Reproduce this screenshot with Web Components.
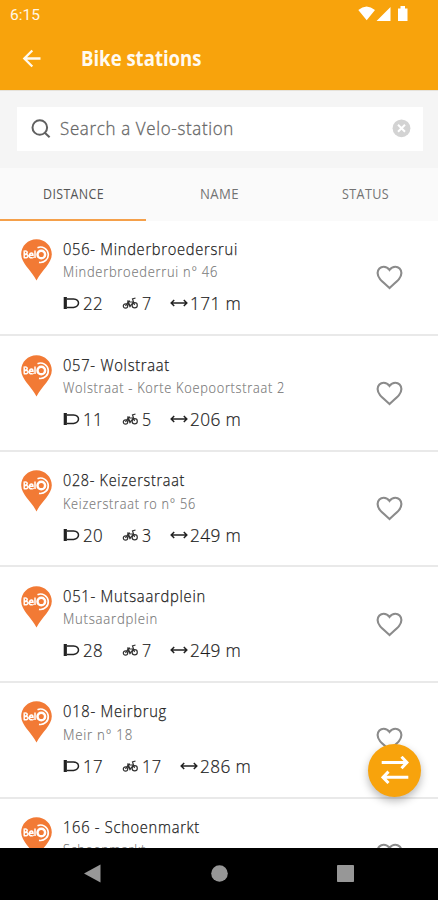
<!DOCTYPE html>
<html lang="en">
<head>
<meta charset="utf-8">
<title>Bike stations</title>
<style>
html,body{margin:0;height:100%;background:#fff;overflow:hidden}
body{font-family:"Open Sans","Noto Sans",sans-serif}
</style>
</head>
<body>
<bike-app></bike-app>
<script>
// One line of text, drawn at a set width
class FitText extends HTMLElement {
  connectedCallback() {
    if (this.shadowRoot) return;
    const w = +this.getAttribute('w');
    this.attachShadow({mode: 'open'}).innerHTML = `
      <style>:host{display:block;flex:none;width:${w}px;white-space:nowrap}
      span{display:inline-block;transform-origin:0 50%}</style><span><slot></slot></span>`;
    const s = this.shadowRoot.querySelector('span');
    const n = s.getBoundingClientRect().width;
    if (n) s.style.transform = `scaleX(${w / n})`;
  }
}

class StatusBar extends HTMLElement {
  constructor() {
    super();
    this.attachShadow({mode: 'open'}).innerHTML = `
    <style>:host{display:flex;height:28px;justify-content:space-between;padding:0 28px 0 10px;color:#fff8e8;font:400 15.5px/30px Roboto,sans-serif}
    svg{margin-top:5px}</style>
    <fit-text w="30">6:15</fit-text>
    <svg width="52" height="18" fill="#fff"><path d="M.3 5Q8.500-2 17 5L8.700 15.300zM18.500 16L32.500 2V16zM40 3.500h2.500V1h4.500v2.500h2.500V16h-9.500z"/></svg>`;
  }
}

class AppBar extends HTMLElement {
  constructor() {
    super();
    this.attachShadow({mode: 'open'}).innerHTML = `
    <style>:host{display:flex;height:61.5px;align-items:center;padding-left:22px;color:#fffaf0;font-weight:700;font-size:20.500px;line-height:30px}
    svg{margin-right:40px}fit-text{margin-top:-2px}</style>
    <svg width="19" height="20" fill="none" stroke="#fffaf0" stroke-width="2.300"><path d="M18.500 9.500H2.500M10.300 1.500L2.300 9.500L10.300 17.500"/></svg>
    <fit-text w="120.5"><slot></slot></fit-text>`;
  }
}

class SearchBox extends HTMLElement {
  constructor() {
    super();
    this.attachShadow({mode: 'open'}).innerHTML = `
    <style>:host{display:block;background:#f5f5f5;padding:16px 15px 17px 17px;height:44px;border-top:1px solid #e6e2da}
    div{display:flex;align-items:center;height:44px;background:#fff;padding:0 12px 0 14px;font-size:18px;color:#666;letter-spacing:.04em;font-weight:300;-webkit-text-stroke:.3px #666}
    .s{margin-right:9px}.c{margin-left:auto}fit-text{margin-top:-1px}</style>
    <div><svg class="s" width="20" height="20" fill="none" stroke="#606060" stroke-width="2"><circle cx="8.800" cy="8.500" r="7.300"/><path d="M13.800 13.700L18.600 18.300"/></svg>
    <fit-text w="174">Search a Velo-station</fit-text>
    <svg class="c" width="19" height="19"><circle cx="9.500" cy="9.300" r="8.900" fill="#d3d3d3"/><path d="M6 5.800l7 7M13 5.800l-7 7" stroke="#fff" stroke-width="2"/></svg></div>`;
  }
}

class SortTabs extends HTMLElement {
  constructor() {
    super();
    this.attachShadow({mode: 'open'}).innerHTML = `
    <style>:host{display:grid;grid-template-columns:repeat(3,1fr);height:53.100px;background:#fafafa;color:#737373;font-size:14px;letter-spacing:.03em}
    div{display:flex;justify-content:center;align-items:center;padding-top:1px;border-bottom:2px solid transparent}
    .on{border-color:#f5a04a;color:#555}</style>
    <div class="on"><fit-text w="61">DISTANCE</fit-text></div><div><fit-text w="39">NAME</fit-text></div><div><fit-text w="47">STATUS</fit-text></div>`;
  }
}

class StationPin extends HTMLElement {
  constructor() {
    super();
    this.attachShadow({mode: 'open'}).innerHTML = `
    <style>:host{display:block;width:31px;height:42px}
    svg{display:block}</style>
    <svg width="31" height="42"><path d="M15.500.3C7 .3.200 7 .200 15.300.200 20 3 24 5.500 27.500 9 32 12.800 36 15.500 41.500 18.200 36 22 32 25.500 27.500 28 24 30.800 20 30.800 15.300 30.800 7 24 .3 15.500.3z" fill="#f27a35"/>
    <g fill="none" stroke="#fff"><circle cx="20.300" cy="15.500" r="3.800" stroke-width="2.500"/><path d="M16.500 8.700A7.700 7.700 0 1 1 18 23.300" stroke-width="1.700"/>
    <path d="M3.200 12.300v6.400M2.600 12.300q3.600-.9 3.600 1T3.500 15.300q3.500-.1 3.500 1.800T2.800 18.700M8.500 16.200h3.500q0-2.300-1.600-2.300t-1.900 2.500 1.900 2.400 1.600-.6M14 11.500v7.500" stroke-width="1.500"/></g></svg>`;
  }
}

class StationRow extends HTMLElement {
  constructor() {
    super();
    const a = n => this.getAttribute(n);
    const [tw, sw, dw] = a('widths').split(' ');
    const counts = () => `<div class="n">
      <svg width="17" height="14" style="margin-right:3px" fill="none" stroke="#222"><path d="M2.300 1v12" stroke-width="3.200"/><path d="M4 3h6.500Q15.500 3.500 15.500 7t-5 4.500H4" stroke-width="1.500"/></svg>
      <fit-text w="20">${a('docks')}</fit-text>
      <svg width="17" height="14" style="margin:0 3px 0 19px" fill="none" stroke="#333" stroke-width="1.200"><circle cx="3.500" cy="10" r="2.200"/><circle cx="12.700" cy="9.200" r="2.600"/><path d="M3.500 10L6 6h5.500M5 5h3M6 6l2 4.500 3.500-4.500M12.500 9L10.500 3l3-1"/><path d="M6.300 7.500l2 2.500" stroke-width="2"/></svg>
      <fit-text w="${a('bikes').length > 1 ? 19.5 : 9.5}">${a('bikes')}</fit-text>
      <svg width="18" height="12" style="margin:0 2px 0 18px" fill="none" stroke="#222" stroke-width="1.500"><path d="M1 6h16M4.200 3L1.200 6l3 3M13.800 3l3 3-3 3"/></svg>
      <fit-text w="${dw}">${a('distance')}</fit-text>
    </div>`;
    this.attachShadow({mode: 'open'}).innerHTML = `
    <style>:host{display:flex;box-sizing:border-box;height:115.6px;flex:none;border-bottom:2px solid #e9e9e9;padding:18.400px 35px 0 21px;font-weight:300;letter-spacing:.05em}
    main{width:300px;margin:-1px 0 0 11px}
    .t{font-size:16px;line-height:22px;color:#222;-webkit-text-stroke:.25px #222}
    .s{font-size:14px;line-height:20px;margin-top:2.500px;color:#777;-webkit-text-stroke:.15px #777}
    .n{display:flex;align-items:center;margin-top:7px;height:28px;font-size:18.500px;line-height:28px;letter-spacing:.02em;color:#1c1c1c;-webkit-text-stroke:.2px #1c1c1c}
    .n svg{flex:none}.h{margin:26px 0 0 auto;flex:none}</style>
    <station-pin></station-pin>
    <main><fit-text class="t" w="${tw}">${a('name')}</fit-text>
    <fit-text class="s" w="${sw}">${a('address')}</fit-text>
    ${a('docks') ? counts() : ''}</main>
    <svg class="h" width="27" height="25" fill="none" stroke="#8b8b8b" stroke-width="2.100"><path d="M13.500 23L11 20.700C5 15.500 1.600 12.500 1.600 8.100 1.600 4.500 4.300 1.700 7.700 1.700c2.200 0 4.300 1.100 5.800 3.200 1.500-2.100 3.600-3.200 5.800-3.200 3.400 0 6.100 2.800 6.100 6.400 0 4.400-3.400 7.400-9.400 12.600z"/></svg>`;
  }
}

class SwapButton extends HTMLElement {
  constructor() {
    super();
    this.attachShadow({mode: 'open'}).innerHTML = `
    <style>:host{display:grid;place-items:center;width:53px;height:53px;border-radius:50%;background:#f8a30c;box-shadow:0 4px 9px rgba(0,0,0,.28)}</style>
    <svg width="28" height="28" fill="none" stroke="#fff" stroke-width="3"><path d="M.7 6.500h25M20.500.8l5.500 5.700-5.500 5.700M27.300 21.300h-25M7.500 15.600L2 21.300 7.500 27"/></svg>`;
  }
}

class NavBar extends HTMLElement {
  constructor() {
    super();
    this.attachShadow({mode: 'open'}).innerHTML = `
    <style>:host{display:flex;align-items:center;justify-content:space-between;height:52.500px;padding:0 84px;background:#000}svg{display:block}</style>
    <svg width="17" height="19" fill="#979797"><path d="M0 9.500L16.500.500v18z"/></svg>
    <svg width="17" height="17" fill="#979797"><circle cx="8.500" cy="8.500" r="8.300"/></svg>
    <svg width="17" height="17" fill="#979797"><rect width="17" height="17" rx=".8"/></svg>`;
  }
}

class BikeApp extends HTMLElement {
  constructor() {
    super();
    this.attachShadow({mode: 'open'}).innerHTML = `
    <style>:host{display:flex;flex-direction:column;position:relative;height:900px;width:438px;overflow:hidden;background:#fff}
    header{background:#f8a30c;flex:none}
    search-box,sort-tabs,nav-bar{flex:none}
    section{flex:1;min-height:0;overflow:hidden;display:flex;flex-direction:column}
    swap-button{position:absolute;right:17px;bottom:103.500px}</style>
    <header><status-bar></status-bar><app-bar>Bike stations</app-bar></header>
    <search-box></search-box>
    <sort-tabs></sort-tabs>
    <section>
      <station-row name="056- Minderbroedersrui" address="Minderbroederrui n° 46" docks="22" bikes="7" distance="171 m" widths="175 155 51"></station-row>
      <station-row name="057- Wolstraat" address="Wolstraat - Korte Koepoortstraat 2" docks="11" bikes="5" distance="206 m" widths="107 222 51"></station-row>
      <station-row name="028- Keizerstraat" address="Keizerstraat ro n° 56" docks="20" bikes="3" distance="249 m" widths="122 133 51"></station-row>
      <station-row name="051- Mutsaardplein" address="Mutsaardplein" docks="28" bikes="7" distance="249 m" widths="143 95 51"></station-row>
      <station-row name="018- Meirbrug" address="Meir n° 18" docks="17" bikes="17" distance="286 m" widths="104 70 51"></station-row>
      <station-row name="166 - Schoenmarkt" address="Schoenmarkt" widths="137 83 51"></station-row>
    </section>
    <nav-bar></nav-bar>
    <swap-button></swap-button>`;
  }
}
// fit-text comes last so that text is measured inside its final styles
customElements.define('status-bar', StatusBar);
customElements.define('app-bar', AppBar);
customElements.define('search-box', SearchBox);
customElements.define('sort-tabs', SortTabs);
customElements.define('station-pin', StationPin);
customElements.define('station-row', StationRow);
customElements.define('swap-button', SwapButton);
customElements.define('nav-bar', NavBar);
customElements.define('bike-app', BikeApp);
customElements.define('fit-text', FitText);
</script>
</body>
</html>
